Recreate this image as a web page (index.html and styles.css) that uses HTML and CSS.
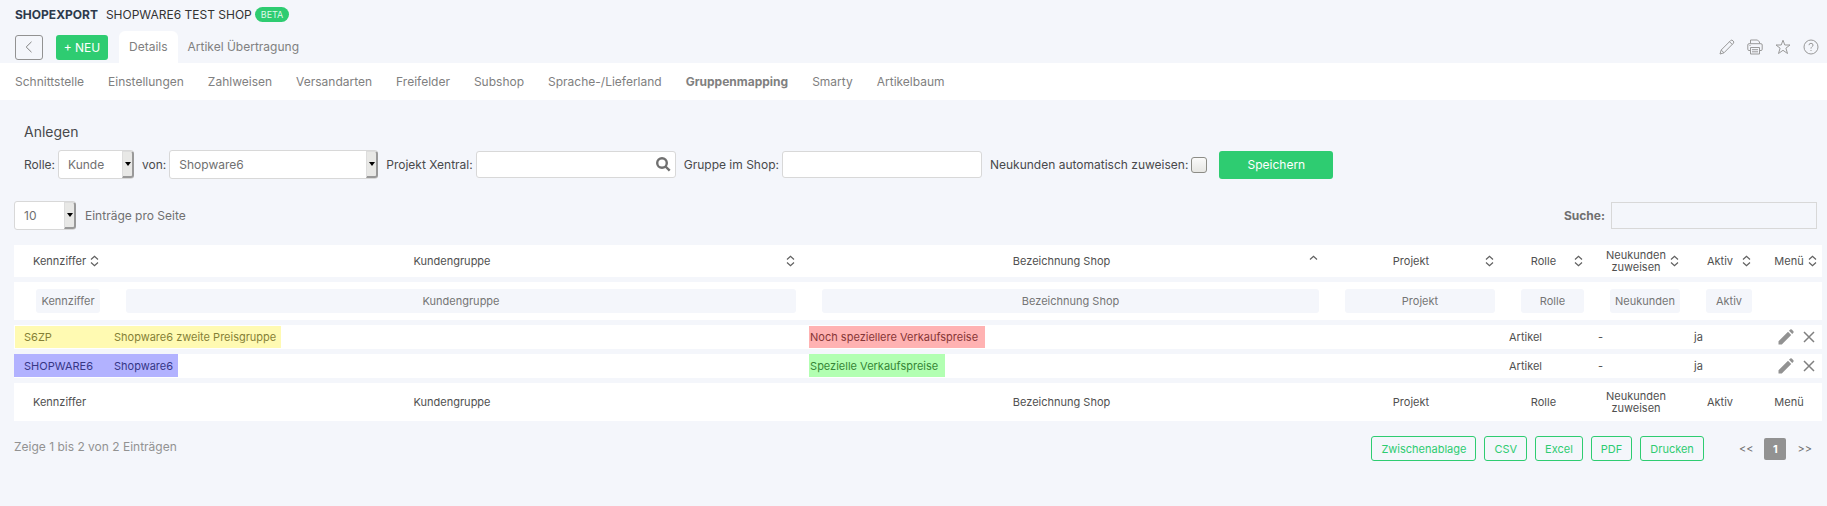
FILE: index.html
```
<!DOCTYPE html>
<html lang="de">
<head>
  <meta charset="utf-8">
  <title>Shopexport - Gruppenmapping</title>
  <link rel="stylesheet" href="styles.css">
</head>
<body>
  <svg class="sprite" aria-hidden="true">
    <symbol id="icon-sort" viewBox="0 0 9 12">
      <path d="M1 4.5L4.5 1.2L8 4.5M1 7.5L4.5 10.8L8 7.5"/>
    </symbol>
    <symbol id="icon-sort-asc" viewBox="0 0 9 12">
      <path d="M1 4.5L4.5 1.2L8 4.5"/>
    </symbol>
    <symbol id="icon-edit" viewBox="0 0 16 16">
      <path d="M0.5 12.2L10 2.8L13.2 6L3.8 15.5H0.5ZM11 1.8L12.3 0.5Q13 0 13.8 0.6L15.4 2.2Q16 3 15.4 3.8L14.2 5Z"/>
    </symbol>
    <symbol id="icon-delete" viewBox="0 0 12 12">
      <path d="M1 1L11 11M11 1L1 11"/>
    </symbol>
  </svg>

  <header class="header">
    <h1><strong>SHOPEXPORT</strong> <span>SHOPWARE6 TEST SHOP</span></h1>
    <span class="badge">BETA</span>
  </header>

  <div class="toolbar">
    <button class="btn-back" aria-label="Zurück">
      <svg width="8" height="12" viewBox="0 0 8 12"><path d="M6.5 0.8L1.2 6L6.5 11.2"/></svg>
    </button>
    <button class="btn-new">+ NEU</button>
    <nav class="tabs">
      <a href="#" class="active">Details</a>
      <a href="#">Artikel Übertragung</a>
    </nav>
    <div class="tools">
      <a href="#" aria-label="Bearbeiten">
        <svg viewBox="0 0 16 16"><path d="M1 15L2.2 11L11.8 1.4Q12.8 0.6 14 1.8Q15.3 3 14.5 4.1L5 13.8ZM2.2 11L5 13.8M10.5 2.7L13.3 5.5"/></svg>
      </a>
      <a href="#" aria-label="Drucken">
        <svg viewBox="0 0 16 16"><path d="M3.5 4.5V1H10.5L12.5 3V4.5M3.5 11.5H2Q0.8 11.5 0.8 10.3V6Q0.8 4.7 2 4.7H14Q15.2 4.7 15.2 6V10.3Q15.2 11.5 14 11.5H12.5M3.5 8.5H12.5V15H3.5ZM5 10.7H11M5 12.8H11M2.5 6.5H3.5"/></svg>
      </a>
      <a href="#" aria-label="Favorit">
        <svg viewBox="0 0 16 16"><path d="M8 1.2L9.8 6H15L10.9 9.2L12.5 14.5L8 11.3L3.5 14.5L5.1 9.2L1 6H6.2Z"/></svg>
      </a>
      <a href="#" aria-label="Hilfe">
        <svg viewBox="0 0 16 16"><circle cx="8" cy="8" r="7"/><path d="M6 6.2Q6 4.3 8 4.3Q10 4.3 10 6.1Q10 7.2 8.9 7.8Q8 8.4 8 9.6M8 11V12"/></svg>
      </a>
    </div>
  </div>

  <nav class="subnav">
    <a href="#">Schnittstelle</a>
    <a href="#">Einstellungen</a>
    <a href="#">Zahlweisen</a>
    <a href="#">Versandarten</a>
    <a href="#">Freifelder</a>
    <a href="#">Subshop</a>
    <a href="#">Sprache-/Lieferland</a>
    <a href="#" class="active">Gruppenmapping</a>
    <a href="#">Smarty</a>
    <a href="#">Artikelbaum</a>
  </nav>

  <main class="content">
    <form class="create">
      <h2>Anlegen</h2>
      <div class="create-row">
        <div class="field">
          <label for="rolle">Rolle:</label>
          <span class="select select-role">
            <select id="rolle"><option>Kunde</option><option>Artikel</option></select>
          </span>
        </div>
        <div class="field">
          <label for="von">von:</label>
          <span class="select select-shop">
            <select id="von"><option>Shopware6</option></select>
          </span>
        </div>
        <div class="field">
          <label for="projekt">Projekt Xentral:</label>
          <span class="lookup">
            <input type="text" id="projekt" class="text-input">
            <svg width="15" height="15" viewBox="0 0 15 15"><circle cx="6" cy="6" r="4.8"/><path d="M9.5 9.5L13.7 13.7"/></svg>
          </span>
        </div>
        <div class="field">
          <label for="gruppe">Gruppe im Shop:</label>
          <input type="text" id="gruppe" class="text-input">
        </div>
        <div class="field">
          <label for="auto">Neukunden automatisch zuweisen:</label>
          <input type="checkbox" id="auto">
        </div>
        <button type="button" class="btn-save">Speichern</button>
      </div>
    </form>

    <div class="table-controls">
      <div class="length">
        <span class="select select-length">
          <select id="length"><option>10</option><option>25</option><option>50</option></select>
        </span>
        <label for="length">Einträge pro Seite</label>
      </div>
      <div class="search">
        <label for="search">Suche:</label>
        <input type="search" id="search">
      </div>
    </div>

    <table class="mapping">
      <colgroup>
        <col class="col-key">
        <col class="col-group">
        <col class="col-name">
        <col class="col-project">
        <col class="col-role">
        <col class="col-new">
        <col class="col-active">
        <col class="col-menu">
      </colgroup>
      <thead>
        <tr class="titles">
          <th><div class="title"><span>Kennziffer</span><svg><use href="#icon-sort"/></svg></div></th>
          <th><div class="title"><span>Kundengruppe</span><svg><use href="#icon-sort"/></svg></div></th>
          <th><div class="title"><span>Bezeichnung Shop</span><svg><use href="#icon-sort-asc"/></svg></div></th>
          <th><div class="title"><span>Projekt</span><svg><use href="#icon-sort"/></svg></div></th>
          <th><div class="title"><span>Rolle</span><svg><use href="#icon-sort"/></svg></div></th>
          <th><div class="title"><span>Neukunden zuweisen</span><svg><use href="#icon-sort"/></svg></div></th>
          <th><div class="title"><span>Aktiv</span><svg><use href="#icon-sort"/></svg></div></th>
          <th><div class="title"><span>Menü</span><svg><use href="#icon-sort"/></svg></div></th>
        </tr>
        <tr class="filters">
          <th><input type="text" placeholder="Kennziffer" aria-label="Kennziffer"></th>
          <th><input type="text" placeholder="Kundengruppe" aria-label="Kundengruppe"></th>
          <th><input type="text" placeholder="Bezeichnung Shop" aria-label="Bezeichnung Shop"></th>
          <th><input type="text" placeholder="Projekt" aria-label="Projekt"></th>
          <th><input type="text" placeholder="Rolle" aria-label="Rolle"></th>
          <th><input type="text" placeholder="Neukunden" aria-label="Neukunden zuweisen"></th>
          <th><input type="text" placeholder="Aktiv" aria-label="Aktiv"></th>
          <th></th>
        </tr>
      </thead>
      <tbody>
        <tr>
          <td class="mark mark-yellow">S6ZP</td>
          <td>Shopware6 zweite Preisgruppe</td>
          <td class="mark mark-red">Noch speziellere Verkaufspreise</td>
          <td></td>
          <td>Artikel</td>
          <td>-</td>
          <td>ja</td>
          <td>
            <div class="actions">
              <a href="#" aria-label="Bearbeiten"><svg class="edit"><use href="#icon-edit"/></svg></a>
              <a href="#" aria-label="Löschen"><svg class="delete"><use href="#icon-delete"/></svg></a>
            </div>
          </td>
        </tr>
        <tr>
          <td class="mark mark-blue">SHOPWARE6</td>
          <td>Shopware6</td>
          <td class="mark mark-green">Spezielle Verkaufspreise</td>
          <td></td>
          <td>Artikel</td>
          <td>-</td>
          <td>ja</td>
          <td>
            <div class="actions">
              <a href="#" aria-label="Bearbeiten"><svg class="edit"><use href="#icon-edit"/></svg></a>
              <a href="#" aria-label="Löschen"><svg class="delete"><use href="#icon-delete"/></svg></a>
            </div>
          </td>
        </tr>
      </tbody>
      <tfoot>
        <tr class="titles">
          <th><div class="title"><span>Kennziffer</span></div></th>
          <th><div class="title"><span>Kundengruppe</span></div></th>
          <th><div class="title"><span>Bezeichnung Shop</span></div></th>
          <th><div class="title"><span>Projekt</span></div></th>
          <th><div class="title"><span>Rolle</span></div></th>
          <th><div class="title"><span>Neukunden zuweisen</span></div></th>
          <th><div class="title"><span>Aktiv</span></div></th>
          <th><div class="title"><span>Menü</span></div></th>
        </tr>
      </tfoot>
    </table>

    <div class="table-footer">
      <div class="info">Zeige 1 bis 2 von 2 Einträgen</div>
      <div class="exports">
        <button>Zwischenablage</button>
        <button>CSV</button>
        <button>Excel</button>
        <button>PDF</button>
        <button>Drucken</button>
      </div>
      <div class="pages">
        <button>&lt;&lt;</button>
        <button class="current">1</button>
        <button>&gt;&gt;</button>
      </div>
    </div>
  </main>
</body>
</html>
```
FILE: styles.css
```
*, *::before, *::after {
  box-sizing: border-box;
}
body {
  margin: 0;
  font-family: Inter, "Liberation Sans", sans-serif;
  font-size: 12px;
  color: #48494b;
  background-color: #f4f6fb;
}
a {
  color: inherit;
  text-decoration: none;
}
button, input, select {
  font-family: inherit;
  font-size: inherit;
}
button {
  cursor: pointer;
}
svg {
  display: block;
  fill: none;
}
.sprite {
  display: none;
}

/* header */
.header {
  display: flex;
  align-items: center;
  gap: 3px;
  height: 28px;
  padding: 0 15px;
}
.header h1 {
  display: flex;
  gap: 8px;
  margin: 0;
  font-size: 12px;
  font-weight: normal;
  color: #333;
}
.header strong {
  color: #2d3a4c;
}
.badge {
  padding: 0 6px;
  border-radius: 8px;
  font-size: 9px;
  line-height: 15px;
  color: #dff8e9;
  background-color: #2ecc71;
}
.toolbar {
  display: flex;
  align-items: center;
  height: 35px;
  padding: 3px 8px 0 15px;
}
.btn-back {
  display: flex;
  align-items: center;
  justify-content: center;
  width: 28px;
  height: 25px;
  padding: 0;
  border: 1px solid #929292;
  border-radius: 3px;
  background: none;
}
.btn-back svg {
  stroke: #808080;
}
.btn-new {
  width: 52px;
  height: 25px;
  margin-left: 13px;
  padding: 0;
  border: none;
  border-radius: 3px;
  color: white;
  background-color: #2ecc71;
}
.tabs {
  display: flex;
  align-self: flex-end;
  margin-left: 11px;
  line-height: 32px;
  color: #808080;
}
.tabs a {
  padding: 0 10px;
}
.tabs .active {
  border-radius: 6px 6px 0 0;
  background-color: white;
}
.tools {
  display: flex;
  gap: 12px;
  margin-left: auto;
}
.tools svg {
  width: 16px;
  height: 16px;
  stroke: #999;
}
.subnav {
  display: flex;
  gap: 24px;
  padding: 0 15px;
  line-height: 37px;
  color: #808080;
  background-color: white;
}
.subnav .active {
  font-weight: bold;
}

/* create form */
.content {
  padding: 23px 5px 40px 14px;
}
.create {
  padding: 0 10px;
}
.create h2 {
  margin: 0 0 9px;
  font-size: 14px;
  line-height: 18px;
  font-weight: normal;
}
.create-row {
  display: flex;
  align-items: center;
  gap: 8px;
}
.field {
  display: flex;
  align-items: center;
  gap: 3px;
}
.select {
  display: inline-block;
  position: relative;
}
.select select {
  width: 100%;
  height: 29px;
  padding: 0 9px;
  border: 1px solid #d8d8d8;
  border-radius: 3px;
  color: #707070;
  background-color: white;
  appearance: none;
}
/* bevelled drop-down button with its arrow */
.select::before {
  content: "";
  position: absolute;
  top: 1px;
  right: 0;
  width: 12px;
  height: 27px;
  border: 1px solid #ddd;
  border-right: 2px solid #999;
  border-bottom: 2px solid #999;
  border-radius: 0 3px 3px 0;
  background-color: #e8e8e6;
  pointer-events: none;
}
.select::after {
  content: "";
  position: absolute;
  top: 12px;
  right: 3px;
  border: 3px solid transparent;
  border-top: 4px solid black;
  border-bottom: 0;
  pointer-events: none;
}
.select-role {
  width: 76px;
}
.select-shop {
  width: 209px;
}
.select-length {
  width: 62px;
}
.text-input {
  width: 200px;
  height: 27px;
  border: 1px solid #d8d8d8;
  border-radius: 3px;
  background-color: white;
}
.lookup {
  position: relative;
}
.lookup svg {
  position: absolute;
  top: 6px;
  right: 5px;
  stroke: #707070;
  stroke-width: 2.4;
}
input[type=checkbox] {
  width: 16px;
  height: 16px;
  margin: 0;
  border: 1px solid #8c8c86;
  border-radius: 3px;
  background-image: linear-gradient(#fafafa, #e6e6e3);
  appearance: none;
}
.btn-save {
  width: 114px;
  height: 28px;
  margin-left: 4px;
  border: none;
  border-radius: 3px;
  color: white;
  background-color: #2ecc71;
}

/* table */
.table-controls {
  display: flex;
  justify-content: space-between;
  align-items: center;
  margin: 22px 5px 10px 0;
  color: #707070;
}
.length {
  display: flex;
  align-items: center;
  gap: 9px;
}
.search {
  display: flex;
  align-items: center;
  gap: 6px;
  font-weight: bold;
}
.search input {
  width: 206px;
  height: 27px;
  border: 1px solid #d8d8d8;
  background: none;
  appearance: none;
}
.mapping {
  width: 100%;
  table-layout: fixed;
  border-spacing: 0 5px;
  font-size: 11px;
  color: #505050;
}
.col-key {
  width: 99px;
}
.col-group {
  width: 38.5%;
}
.col-project {
  width: 176px;
}
.col-role {
  width: 89px;
}
.col-new {
  width: 96px;
}
.col-active {
  width: 72px;
}
.col-menu {
  width: 57px;
}
.mapping th, .mapping td {
  height: 24px;
  padding: 0 1px;
  text-align: left;
  font-weight: normal;
  background-color: white;
}
.mapping td:first-child {
  padding-left: 10px;
}
.mapping .titles th {
  height: 32px;
  padding: 0;
}
.mapping tfoot .titles th {
  height: 38px;
}
.title {
  display: flex;
  align-items: center;
  padding: 0 14px 0 5px;
  line-height: 12px;
}
.title span {
  flex: 1;
  text-align: center;
}
.title svg {
  width: 9px;
  height: 12px;
  stroke: #606060;
  stroke-width: 1.2;
}
th:first-child .title {
  padding-left: 15px;
}
th:last-child .title {
  padding-right: 5px;
}
tfoot th .title {
  padding-right: 23px;
}
tfoot th:last-child .title {
  padding-right: 14px;
}
.mapping .filters th {
  height: 38px;
  padding: 0 13px;
}
.mapping .filters th:first-child {
  padding-left: 22px;
}
.filters input {
  display: block;
  width: 100%;
  height: 24px;
  padding: 0 2px;
  border: none;
  border-radius: 3px;
  text-align: center;
  background-color: #f4f6fb;
}
.filters input::placeholder {
  color: #757575;
}
.actions {
  display: flex;
  align-items: center;
  justify-content: flex-end;
  gap: 9px;
  padding-right: 6px;
}
.edit {
  width: 16px;
  height: 16px;
  fill: #929292;
}
.delete {
  width: 12px;
  height: 12px;
  stroke: #808080;
  stroke-width: 1.5;
}

.mark {
  position: relative;
}
.mark::after {
  content: "";
  position: absolute;
  z-index: 1;
  top: 0;
  left: 0;
  height: 23px;
}
.mark-yellow::after {
  top: 1px;
  left: 1px;
  width: 266px;
  height: 22px;
  background-color: rgba(255,240,0,0.3);
}
.mark-blue::after {
  width: 164px;
  background-color: rgba(0,0,255,0.3);
}
.mark-red::after {
  top: 1px;
  width: 176px;
  height: 22px;
  background-color: rgba(255,0,0,0.3);
}
.mark-green::after {
  width: 136px;
  background-color: rgba(0,255,0,0.3);
}

.table-footer {
  display: flex;
  align-items: flex-start;
  margin-top: 10px;
  padding-right: 5px;
}
.info {
  line-height: 22px;
  color: #929292;
}
.exports {
  display: flex;
  gap: 8px;
  margin-left: auto;
}
.exports button {
  height: 25px;
  padding: 0 9px;
  border: 1px solid #2ecc71;
  border-radius: 3px;
  font-size: 11px;
  color: #2ecc71;
  background: none;
}
.pages {
  display: flex;
  align-items: center;
  gap: 6px;
  height: 25px;
  margin-left: 30px;
}
.pages button {
  height: 22px;
  padding: 0 5px;
  border: none;
  font-size: 11px;
  color: #707070;
  background: none;
}
.pages .current {
  width: 22px;
  border-radius: 2px;
  font-weight: bold;
  color: white;
  background-color: #929292;
}
```
